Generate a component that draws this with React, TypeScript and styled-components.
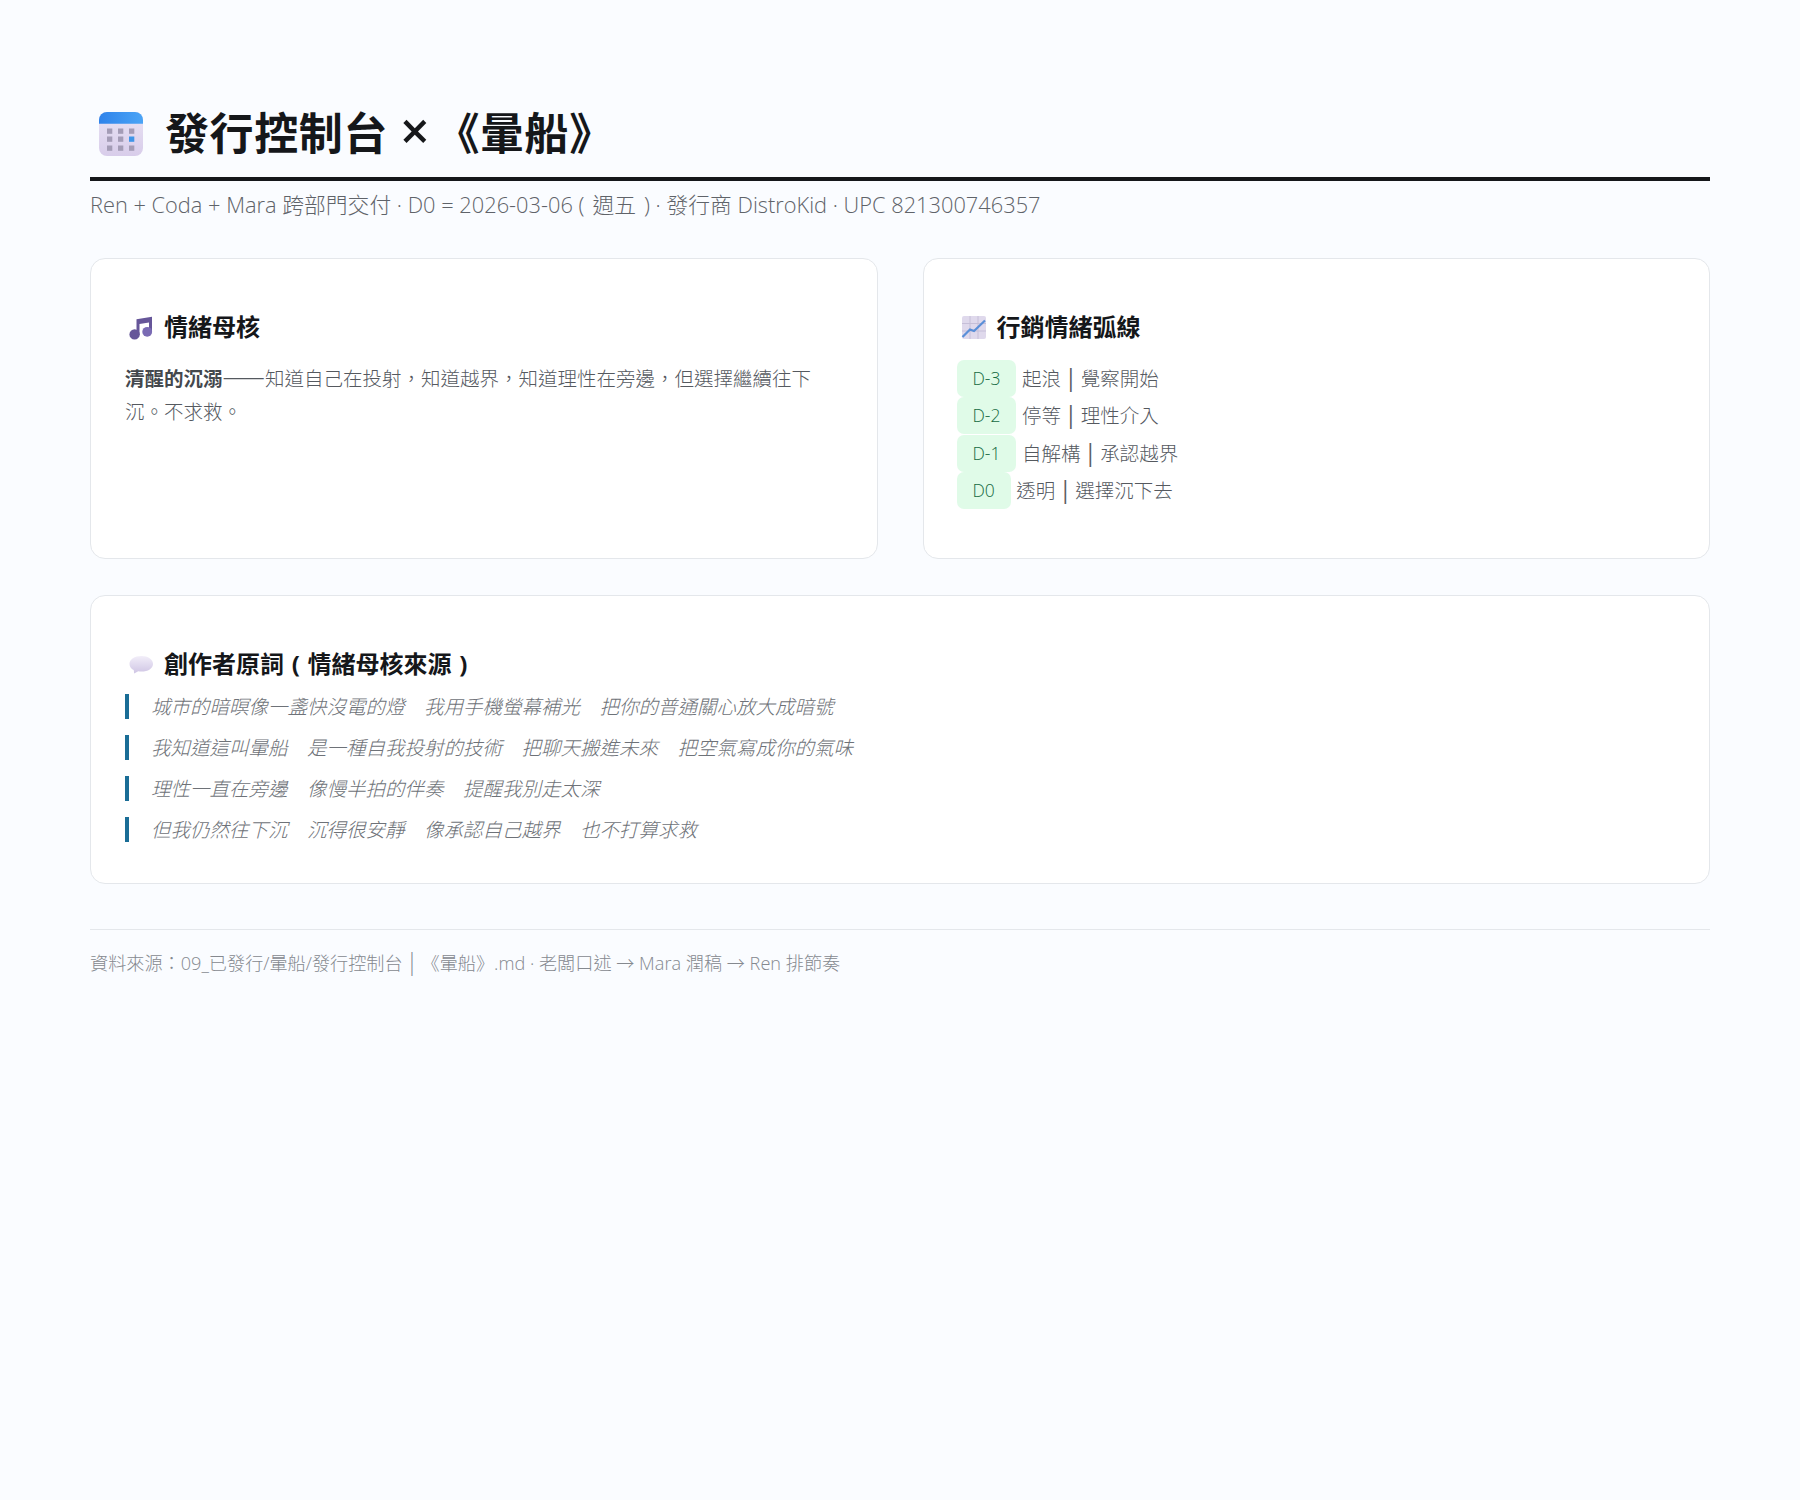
import styled, { createGlobalStyle } from "styled-components";

const GlobalStyle = createGlobalStyle`
  * { box-sizing: border-box; }
  body {
    margin: 0;
    background: #fafcff;
    color: #222;
    font-family: "Open Sans", "Noto Sans CJK TC", sans-serif;
  }
`;

const Page = styled.div`
  min-height: 1500px;
  padding: 104px 90px 40px;
`;

const Header = styled.header`
  border-bottom: 4px solid #15171a;
  padding: 2px 0 16px 8px;
  display: flex;
  align-items: center;
  gap: 21px;
`;

const Title = styled.h1`
  margin: 0;
  font-size: 44px;
  line-height: 55px;
  font-weight: 700;
  letter-spacing: 0.6px;
  color: #15171a;
`;

const Times = styled.span`
  font-size: 52px;
  line-height: 0;
  font-weight: 600;
  margin-right: 5px;
`;

const Subtitle = styled.p`
  margin: 8px 0 0;
  font-size: 21.8px;
  line-height: 32px;
  font-weight: 300;
  color: #5f6369;
`;

const Note = styled.span`
  word-spacing: 2.3px;
`;

const Grid = styled.div`
  display: grid;
  grid-template-columns: 1fr 1fr;
  gap: 45px;
  margin-top: 37px;
`;

const Card = styled.section`
  background: #fff;
  border: 1px solid #e4e7eb;
  border-radius: 15px;
  padding: 52px 34px 48px;
`;

const LyricsCard = styled(Card)`
  margin-top: 36px;
  padding-bottom: 41px;
`;

const CardTitle = styled.h2`
  margin: 0 0 14px 3px;
  display: flex;
  align-items: center;
  gap: 10px;
  font-size: 24px;
  line-height: 32px;
  font-weight: 700;
  word-spacing: 1.5px;
  color: #15171a;
`;

const BodyText = styled.p`
  margin: 16px 0 0;
  font-size: 19.5px;
  line-height: 32.5px;
  font-weight: 300;
  color: #55595f;
  strong { color: #44484d; font-weight: 700; }
`;

const Dash = styled.span`
  font-family: "Noto Sans CJK TC", sans-serif;
  font-size: 25.5px;
`;

const Arc = styled.div`
  margin-top: 16.5px;
`;

const ArcRow = styled.div`
  font-size: 19.5px;
  line-height: 37.5px;
  font-weight: 300;
  color: #55595f;
`;

const Chip = styled.span`
  display: inline-block;
  height: 37px;
  padding: 0 16px;
  margin: 0 5.5px 0 -1px;
  border-radius: 7px;
  background: #e0fbe8;
  color: #156a42;
  font-size: 17.5px;
  vertical-align: top;
`;

const Pipe = styled.span<{ $muted?: boolean }>`
  font-size: 23px;
  line-height: 0;
  margin: 0 -1.5px;
  font-weight: ${(props) => (props.$muted ? 300 : 400)};
  color: ${(props) => (props.$muted ? "inherit" : "#5a5e64")};
`;

const LyricList = styled.div`
  display: flex;
  flex-direction: column;
  gap: 16px;
`;

const Lyric = styled.blockquote`
  margin: 0;
  border-left: 4.5px solid #1a6d96;
  padding-left: 22px;
  font-size: 19.5px;
  line-height: 25px;
  font-style: italic;
  font-weight: 300;
  color: #6e7278;
`;

const Footer = styled.footer`
  margin-top: 45px;
  padding-top: 18px;
  border-top: 1px solid #e4e7eb;
  font-size: 18.15px;
  line-height: 30px;
  font-weight: 300;
  color: #85898f;
`;

const CalendarIcon = () => (
  <svg width="46" height="46" viewBox="0 0 46 46">
    <defs>
      <linearGradient id="calBody" x1="0" y1="0" x2="0" y2="1">
        <stop offset="0" stopColor="#e9e3f4" />
        <stop offset="1" stopColor="#d8cdea" />
      </linearGradient>
      <linearGradient id="calTop" x1="0" y1="0" x2="1" y2="0">
        <stop offset="0" stopColor="#2f83ea" />
        <stop offset="1" stopColor="#4aa4f6" />
      </linearGradient>
    </defs>
    <rect x="1" y="1" width="44" height="44" rx="8" fill="url(#calBody)" />
    <path d="M1 12.7V9a8 8 0 0 1 8-8h28a8 8 0 0 1 8 8v3.7z" fill="url(#calTop)" />
    {[17.5, 25.5, 34.5].map((y) =>
      [9, 20, 31].map((x) => (
        <rect key={`${x}-${y}`} x={x} y={y} width="5.3" height="5.3" fill={x === 31 && y === 25.5 ? "#3f95e8" : "#a49cb6"} />
      ))
    )}
  </svg>
);

const MusicIcon = () => (
  <svg width="26" height="26" viewBox="0 0 26 26">
    <path d="M8.5 5.2 24 2.8V18h-3V8.6l-9.5 1.5V21h-3z" fill="#665699" />
    <circle cx="6.6" cy="20.4" r="5.2" fill="#665699" />
    <circle cx="19.2" cy="17.8" r="4.9" fill="#7a6bb4" />
  </svg>
);

const ChartIcon = () => (
  <svg width="26" height="26" viewBox="0 0 26 26">
    <rect x="1" y="2" width="24" height="23" rx="2" fill="#dfd9ec" />
    <path d="M1 9.5h24M1 17h24M9 2v23M17 2v23" stroke="#c6bfd8" strokeWidth="1" />
    <path d="M1.5 23 9 15.5l4 1.5L24 6.5" fill="none" stroke="#5a8fd8" strokeWidth="2.2" />
  </svg>
);

const BubbleIcon = () => (
  <svg width="26" height="26" viewBox="0 0 26 26">
    <defs>
      <linearGradient id="bubble" x1="0" y1="0" x2="0" y2="1">
        <stop offset="0" stopColor="#f2eef9" />
        <stop offset="1" stopColor="#cfc5e4" />
      </linearGradient>
    </defs>
    <path d="M13.5 5C6.5 5 1.5 8.5 1.5 13c0 2.6 1.6 4.7 4.2 6.1L6.2 22.500l4-2.200c1 .2 2.100.3 3.300.3 6.500 0 11.500-3.300 11.500-7.700S20 5 13.500 5z" fill="url(#bubble)" />
  </svg>
);

const arc = [
  { tag: "D-3", from: "起浪", to: "覺察開始" },
  { tag: "D-2", from: "停等", to: "理性介入" },
  { tag: "D-1", from: "自解構", to: "承認越界" },
  { tag: "D0", from: "透明", to: "選擇沉下去" },
];

const lyrics = [
  "城市的暗暝像一盞快沒電的燈　我用手機螢幕補光　把你的普通關心放大成暗號",
  "我知道這叫暈船　是一種自我投射的技術　把聊天搬進未來　把空氣寫成你的氣味",
  "理性一直在旁邊　像慢半拍的伴奏　提醒我別走太深",
  "但我仍然往下沉　沉得很安靜　像承認自己越界　也不打算求救",
];

export default function App() {
  return (
    <Page>
      <GlobalStyle />
      <Header>
        <CalendarIcon />
        <Title>發行控制台 <Times>×</Times>《暈船》</Title>
      </Header>
      <Subtitle>Ren + Coda + Mara 跨部門交付 · D0 = 2026-03-06 <Note>( 週五 )</Note> · 發行商 DistroKid · UPC 821300746357</Subtitle>
      <Grid>
        <Card>
          <CardTitle><MusicIcon />情緒母核</CardTitle>
          <BodyText><strong>清醒的沉溺</strong><Dash>——</Dash>知道自己在投射，知道越界，知道理性在旁邊，但選擇繼續往下沉。不求救。</BodyText>
        </Card>
        <Card>
          <CardTitle><ChartIcon />行銷情緒弧線</CardTitle>
          <Arc>
            {arc.map((item) => (
              <ArcRow key={item.tag}><Chip>{item.tag}</Chip>{item.from} <Pipe>|</Pipe> {item.to}</ArcRow>
            ))}
          </Arc>
        </Card>
      </Grid>
      <LyricsCard>
        <CardTitle><BubbleIcon />創作者原詞 ( 情緒母核來源 )</CardTitle>
        <LyricList>
          {lyrics.map((line) => (
            <Lyric key={line}>{line}</Lyric>
          ))}
        </LyricList>
      </LyricsCard>
      <Footer>資料來源：09_已發行/暈船/發行控制台 <Pipe $muted>|</Pipe> 《暈船》.md · 老闆口述 → Mara 潤稿 → Ren 排節奏</Footer>
    </Page>
  );
}
